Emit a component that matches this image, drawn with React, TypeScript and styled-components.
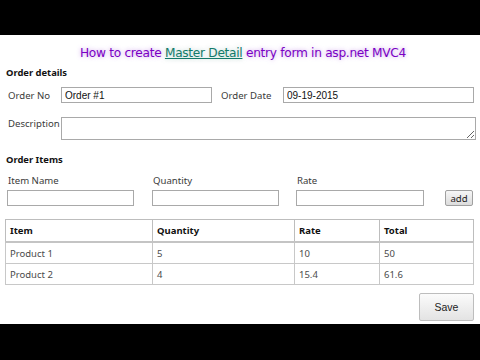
import styled, { createGlobalStyle } from "styled-components";

const GlobalStyle = createGlobalStyle`
  html, body {
    margin: 0;
    padding: 0;
    background: #000;
  }
`;

const rows = [
  { item: "Product 1", qty: "5", rate: "10", total: "50" },
  { item: "Product 2", qty: "4", rate: "15.4", total: "61.6" },
];

function App() {
  return (
    <>
      <GlobalStyle />
      <Screen>
        <BlackBar $height={35} />
        <Page>
          <Title>
            How to create <TitleLink>Master Detail</TitleLink> entry form in
            asp.net MVC4
          </Title>
          <SectionHeading>Order details</SectionHeading>
          <FieldRow>
            <Label $width={53}>Order No</Label>
            <TextInput $width={151} defaultValue="Order #1" />
            <Label $width={62} $gap={9}>
              Order Date
            </Label>
            <TextInput $grow defaultValue="09-19-2015" />
          </FieldRow>
          <FieldRow $top={14}>
            <Label $width={53} $alignTop>
              Description
            </Label>
            <TextArea />
          </FieldRow>
          <SectionHeading $top={11}>Order Items</SectionHeading>
          <ItemGrid>
            <ItemField>
              <SmallLabel>Item Name</SmallLabel>
              <TextInput $width={127} />
            </ItemField>
            <ItemField>
              <SmallLabel>Quantity</SmallLabel>
              <TextInput $width={127} />
            </ItemField>
            <ItemField>
              <SmallLabel>Rate</SmallLabel>
              <TextInput $width={128} />
            </ItemField>
            <AddButton>add</AddButton>
          </ItemGrid>
          <Table>
            <colgroup>
              <col style={{ width: 147 }} />
              <col style={{ width: 142 }} />
              <col style={{ width: 85 }} />
              <col />
            </colgroup>
            <thead>
              <tr>
                <Th>Item</Th>
                <Th>Quantity</Th>
                <Th>Rate</Th>
                <Th>Total</Th>
              </tr>
            </thead>
            <tbody>
              {rows.map((r) => (
                <tr key={r.item}>
                  <Td>{r.item}</Td>
                  <Td>{r.qty}</Td>
                  <Td>{r.rate}</Td>
                  <Td>{r.total}</Td>
                </tr>
              ))}
            </tbody>
          </Table>
          <Footer>
            <SaveButton>Save</SaveButton>
          </Footer>
        </Page>
        <BlackBar $height={36} />
      </Screen>
    </>
  );
}
export default App;

const Screen = styled.div`
  width: 480px;
  height: 360px;
  display: flex;
  flex-direction: column;
  overflow: hidden;
`;

const BlackBar = styled.div<{ $height: number }>`
  height: ${(p) => p.$height}px;
  flex: none;
  background: #000;
`;

const Page = styled.div`
  flex: 1;
  min-height: 0;
  overflow: hidden;
  background: #fff;
  padding: 0 6px 0 6px;
  font-family: "Noto Sans", "Open Sans", sans-serif;
  color: #333;
  display: flex;
  flex-direction: column;
`;

const Title = styled.div`
  margin-top: 9px;
  height: 18px;
  line-height: 18px;
  text-align: center;
  font-family: "DejaVu Sans", Verdana, sans-serif;
  font-size: 12.2px;
  letter-spacing: -0.3px;
  color: #7a00c4;
  text-shadow: 0 0 4px rgba(160, 80, 215, 0.6);
  padding-left: 6px;
`;

const TitleLink = styled.span`
  color: #137a6a;
  text-decoration: underline;
  text-shadow: 0 0 4px rgba(120, 170, 160, 0.5);
`;

const SectionHeading = styled.div<{ $top?: number }>`
  margin-top: ${(p) => p.$top ?? 2}px;
  height: 17px;
  line-height: 17px;
  font-size: 9.4px;
  font-weight: 700;
  color: #111;
`;

const FieldRow = styled.div<{ $top?: number }>`
  display: flex;
  align-items: center;
  margin-top: ${(p) => p.$top ?? 6}px;
`;

const Label = styled.label<{ $width: number; $gap?: number; $alignTop?: boolean }>`
  flex: none;
  width: ${(p) => p.$width}px;
  margin-left: ${(p) => p.$gap ?? 2}px;
  font-size: 9.6px;
  color: #3a3a3a;
  align-self: ${(p) => (p.$alignTop ? "flex-start" : "center")};
`;

const TextInput = styled.input<{ $width?: number; $grow?: boolean }>`
  box-sizing: border-box;
  height: 16px;
  width: ${(p) => (p.$width ? `${p.$width}px` : "auto")};
  flex: ${(p) => (p.$grow ? "1" : "none")};
  min-width: 0;
  margin: 0;
  border: 1px solid #a9a9a9;
  padding: 0 3px;
  font-family: "Liberation Sans", Arial, sans-serif;
  font-size: 10px;
  color: #111;
  outline: none;
`;

const TextArea = styled.textarea`
  box-sizing: border-box;
  display: block;
  flex: none;
  width: 415px;
  height: 23px;
  border: 1px solid #a9a9a9;
  padding: 2px 3px;
  margin: 0;
  resize: both;
  font-family: "Liberation Sans", Arial, sans-serif;
  font-size: 10px;
`;

const ItemGrid = styled.div`
  display: grid;
  grid-template-columns: 145px 144px 149px auto;
  align-items: end;
  margin-top: 6px;
  padding-left: 1px;
`;

const ItemField = styled.div`
  display: flex;
  flex-direction: column;
  gap: 2px;
`;

const SmallLabel = styled.span`
  font-size: 9.6px;
  color: #3a3a3a;
  margin-left: 1px;
  height: 14px;
  line-height: 14px;
`;

const AddButton = styled.button`
  box-sizing: border-box;
  justify-self: start;
  width: 28px;
  height: 16px;
  padding: 0;
  border: 1px solid #a0a0a0;
  border-radius: 2px;
  background: linear-gradient(#f6f6f6, #dcdcdc);
  font-family: "Noto Sans", sans-serif;
  font-size: 9.6px;
  line-height: 13px;
  color: #222;
`;

const Table = styled.table`
  margin-top: 13px;
  margin-left: -1px;
  width: 469px;
  border-collapse: collapse;
  table-layout: fixed;
  font-size: 9.5px;
`;

const Th = styled.th`
  height: 21px;
  padding: 0 4px;
  border: 1px solid #bdbdbd;
  border-bottom: 2px solid #c4c4c4;
  text-align: left;
  font-weight: 700;
  color: #111;
`;

const Td = styled.td`
  height: 20px;
  padding: 0 4px;
  border: 1px solid #c8c8c8;
  color: #4a4a4a;
`;

const Footer = styled.div`
  display: flex;
  justify-content: flex-end;
  margin-top: 8px;
`;

const SaveButton = styled.button`
  box-sizing: border-box;
  width: 55px;
  height: 28px;
  border: 1px solid #bdbdbd;
  border-radius: 2px;
  background: linear-gradient(#fbfbfb, #e3e3e3);
  font-family: "Liberation Sans", Arial, sans-serif;
  font-size: 10.5px;
  color: #222;
`;
